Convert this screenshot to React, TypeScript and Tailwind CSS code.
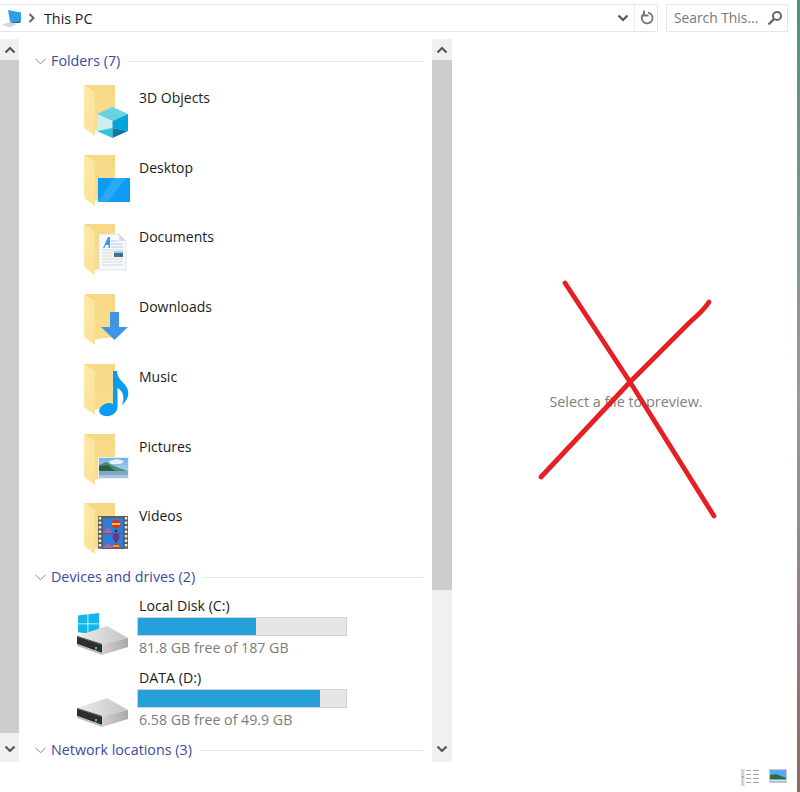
import React from "react";

const font = { fontFamily: '"Open Sans", "Noto Sans", sans-serif' };

function Folder({ children }: { children?: React.ReactNode }) {
  return (
    <svg width="48" height="56" viewBox="0 0 48 56" className="shrink-0 block">
      <defs>
        <linearGradient id="fb" x1="0" y1="0" x2="0" y2="1">
          <stop offset="0" stopColor="#f7d884" />
          <stop offset="1" stopColor="#f9dc90" />
        </linearGradient>
        <linearGradient id="ff" x1="0" y1="0" x2="1" y2="1">
          <stop offset="0" stopColor="#fdeaa8" />
          <stop offset="1" stopColor="#fbe196" />
        </linearGradient>
      </defs>
      <path d="M0 0H31V43L14 45 11 46V8Z" fill="url(#fb)" />
      <path d="M0 0L11 8V51L0 43Z" fill="url(#ff)" />
      {children}
    </svg>
  );
}

function Cube() {
  return (
    <>
      <path d="M28.5 22L44 29 28.5 36 13 29Z" fill="#66d3e2" />
      <path d="M13 29L28.5 36V43L13 46Z" fill="#cdeff3" />
      <path d="M13 46L28.5 43V53Z" fill="#2cc6d8" />
      <path d="M28.5 36L44 29V46L28.5 43Z" fill="#05a3db" />
      <path d="M28.5 43L44 46 28.5 53Z" fill="#087ba6" />
    </>
  );
}

function Monitor() {
  return (
    <>
      <rect x="14" y="23" width="32" height="24" fill="#0e9cf3" />
      <path d="M30 23H42L24 47H14Z" fill="#2aa9f5" />
    </>
  );
}

function Doc() {
  return (
    <>
      <path d="M15 10H35L42 17V46H15Z" fill="#f7f8fa" stroke="#d8dbe0" strokeWidth="0.7" />
      <path d="M35 10V17H42Z" fill="#d9dde2" />
      <path d="M19 24L24 13H26V24H24.5V21H21.5L20.5 24Z" fill="#3f9ae0" />
      <path d="M27 17H33M27 20H39M27 23H39" stroke="#a9cde8" strokeWidth="1" />
      <path d="M18 26H39M18 29H28M18 32H28M18 35H39M18 38H39M18 41H39" stroke="#d4d8dd" strokeWidth="1" />
      <rect x="30" y="27" width="9" height="6" fill="#3d6f8e" />
      <rect x="30" y="27" width="9" height="2" fill="#a8cbe4" />
    </>
  );
}

function Down() {
  return <path d="M26 18H35V33H44L30.5 46 17 33H26Z" fill="#3e96e6" />;
}

function Note() {
  return (
    <path
      d="M29 7H33C33 14 38 17 42 22 46 28 45 35 38 41 41 33 39 27 33.5 24V43C33.5 49 27 53 21 52 15 51 13 46 18 42 21 39 26 38 29 40Z"
      fill="#0b9bf1"
    />
  );
}

function Photo() {
  return (
    <>
      <defs>
        <linearGradient id="sky" x1="0" y1="0" x2="0" y2="1">
          <stop offset="0" stopColor="#6fb0e8" />
          <stop offset="1" stopColor="#cfe4f2" />
        </linearGradient>
      </defs>
      <rect x="14" y="23" width="31" height="22" fill="#eef1f4" />
      <rect x="15" y="24" width="29" height="20" fill="url(#sky)" />
      <path d="M25 27L33 25 40 27 37 30 27 30Z" fill="#e8f2fa" />
      <path d="M15 31L22 28 28 31 35 34 44 37V40H15Z" fill="#4f8a6a" />
      <path d="M15 32L24 31 31 37H15Z" fill="#2c5e48" />
      <path d="M15 37H44V44H15Z" fill="#7ea8c4" />
      <path d="M15 41H44V44H15Z" fill="#a9c8dc" />
    </>
  );
}

function Film() {
  return (
    <>
      <rect x="14" y="13" width="30" height="33" fill="#5c5c5c" />
      <path d="M16 14V46M42 14V46" stroke="#e8e8e8" strokeWidth="2.5" strokeDasharray="2.5 2" />
      <rect x="19" y="15" width="20" height="15" fill="#2b7fd8" />
      <rect x="19" y="31" width="20" height="14" fill="#2b7fd8" />
      <circle cx="32" cy="21" r="4.5" fill="#d8322a" />
      <path d="M28 21H36" stroke="#f4c430" strokeWidth="2" />
      <path d="M32 26L30.5 29H33.5Z" fill="#222" />
      <path d="M19 30L24 25 29 30Z" fill="#b560a8" />
      <circle cx="32" cy="34" r="3.5" fill="#7a2d8a" />
      <path d="M32 37.5V39" stroke="#111" strokeWidth="1.5" />
      <circle cx="32" cy="43" r="3" fill="#d8322a" />
      <path d="M29 43H35" stroke="#f4c430" strokeWidth="1.5" />
      <path d="M19 45L24 40 29 45Z" fill="#b560a8" />
    </>
  );
}

function DriveBody() {
  return (
    <>
      <defs>
        <linearGradient id="dt" x1="0" y1="0" x2="1" y2="0">
          <stop offset="0" stopColor="#ececec" />
          <stop offset="1" stopColor="#c4c4c4" />
        </linearGradient>
        <linearGradient id="dr" x1="0" y1="0" x2="1" y2="0">
          <stop offset="0" stopColor="#d2d2d2" />
          <stop offset="1" stopColor="#a9a9a9" />
        </linearGradient>
      </defs>
      <path d="M0 10L30 0 51 12 25 18Z" fill="url(#dt)" />
      <path d="M25 18L51 12V21L25 29Z" fill="url(#dr)" />
      <path d="M0 10L25 18V27L0 18Z" fill="#2e2e2e" />
      <path d="M0 18L25 27V29L0 20Z" fill="#bdbdbd" />
      <path d="M0 10L25 18V19L0 11Z" fill="#6a6a6a" />
      <rect x="18" y="21" width="2" height="2.5" fill="#39d353" />
    </>
  );
}

function DriveIcon({ windows }: { windows?: boolean }) {
  return (
    <svg width="54" height="44" viewBox="0 0 54 44" className="shrink-0 block">
      {windows && (
        <>
          <path d="M1 2.6L10.5 1.3V10.5H1Z" fill="#12b5ec" />
          <path d="M11.3 1.2L22 0V10.5H11.3Z" fill="#12b5ec" />
          <path d="M1 11.3H10.5V20.5L1 19.3Z" fill="#12b5ec" />
          <path d="M11.3 11.3H22V22L11.3 20.6Z" fill="#12b5ec" />
        </>
      )}
      <g transform="translate(0 13)">
        <DriveBody />
      </g>
    </svg>
  );
}

function Chevron({ up, className }: { up?: boolean; className?: string }) {
  return (
    <svg width="12" height="8" viewBox="0 0 12 8" className={className}>
      <path d={up ? "M1.5 6.5L6 2 10.5 6.5" : "M1.5 1.5L6 6 10.5 1.5"} fill="none" stroke="#555" strokeWidth="2.2" />
    </svg>
  );
}

function Header({ title }: { title: string }) {
  return (
    <div className="flex items-center h-5 pl-[16px] pr-[9px]">
      <svg width="11" height="7" viewBox="0 0 11 7" className="shrink-0">
        <path d="M0.5 0.8L5.5 5.8 10.5 0.8" fill="none" stroke="#8a8a8a" strokeWidth="1" />
      </svg>
      <span className="ml-[5px] text-[14.3px] leading-5 text-[#3b4a9e] whitespace-nowrap">{title}</span>
      <div className="ml-[8px] flex-1 h-px bg-[#e3e3e3]" />
    </div>
  );
}

const folders: [string, React.ReactNode][] = [
  ["3D Objects", <Cube />],
  ["Desktop", <Monitor />],
  ["Documents", <Doc />],
  ["Downloads", <Down />],
  ["Music", <Note />],
  ["Pictures", <Photo />],
  ["Videos", <Film />],
];

function Drive({ name, free, pct, windows }: { name: string; free: string; pct: number; windows?: boolean }) {
  return (
    <div className="flex pl-[58px]">
      <div className="w-[60px] pt-[16px]">
        <DriveIcon windows={windows} />
      </div>
      <div className="w-[210px]">
        <div className="h-[18px] leading-[18px] text-[14.2px] text-[#1a1a1a] pl-[2px] whitespace-nowrap">{name}</div>
        <div className="mt-[2px] h-[19px] bg-[#e6e6e6] border border-[#d2d2d2]">
          <div className="h-full bg-[#26a0da]" style={{ width: `${pct}%` }} />
        </div>
        <div className="mt-[3px] h-[18px] leading-[18px] text-[14.2px] text-[#7b7b7b] pl-[2px] whitespace-nowrap">{free}</div>
      </div>
    </div>
  );
}

function ScrollBar({ thumb, width }: { thumb: string; width: string }) {
  return (
    <div className={`flex flex-col bg-[#f0f0f0] h-full shrink-0 ${width}`}>
      <div className="h-[21px] flex items-center justify-center shrink-0">
        <Chevron up />
      </div>
      <div className={thumb} />
      <div className="flex-1" />
      <div className="h-[29px] flex items-center justify-center shrink-0 pt-[2px]">
        <Chevron />
      </div>
    </div>
  );
}

export default function App() {
  return (
    <div className="relative w-[800px] h-[792px] flex bg-white overflow-hidden" style={font}>
      <div className="flex-1 flex flex-col min-w-0">
        {/* top bar */}
        <div className="flex h-[28px] mt-[4px] pr-[9px] shrink-0">
          <div className="flex-1 flex items-center border-y border-r border-[#e6e6e6] pl-[2px]">
            <svg width="20" height="19" viewBox="0 0 20 19" className="shrink-0">
              <path d="M6 1L19 3.5V12L8 12.5Z" fill="#2f9fe8" />
              <path d="M8 12.5L19 12 18 14 8 14Z" fill="#1b6fb8" />
              <path d="M0 15.5L8 13 15 15 8 18.5Z" fill="#d3d6da" />
            </svg>
            <svg width="8" height="10" viewBox="0 0 8 10" className="ml-[6px] shrink-0">
              <path d="M1.5 1L5.5 5 1.5 9" fill="none" stroke="#666" strokeWidth="2" />
            </svg>
            <span className="ml-[8px] pt-[1px] text-[14.3px] text-[#1a1a1a]">This PC</span>
            <div className="flex-1" />
            <Chevron className="mr-[3px]" />
            <div className="ml-[2px] w-px h-full bg-[#ececec]" />
            <svg width="16" height="16" viewBox="0 0 16 16" className="ml-[4px] mr-[2px] shrink-0">
              <path d="M9 2.6A5.4 5.4 0 1 1 4.5 4" fill="none" stroke="#777" strokeWidth="1.8" />
              <path d="M5 0.5V5.5H9.5" fill="none" stroke="#777" strokeWidth="1.8" />
            </svg>
          </div>
          <div className="ml-[8px] w-[122px] flex items-center border border-[#e6e6e6] pl-[7px]">
            <span className="pt-[1px] text-[13.8px] text-[#777777] whitespace-nowrap">Search This...</span>
            <div className="flex-1" />
            <svg width="16" height="16" viewBox="0 0 16 16" className="mr-[4px] shrink-0">
              <circle cx="10" cy="6" r="4" fill="none" stroke="#666" strokeWidth="2" />
              <path d="M7 9L1.5 14.5" stroke="#666" strokeWidth="2.4" />
            </svg>
          </div>
        </div>

        {/* main */}
        <div className="flex h-[723px] mt-[7px] shrink-0">
          <ScrollBar width="w-[19px]" thumb="bg-[#cdcdcd] h-[673px] shrink-0" />
          <div className="w-[413px] shrink-0 overflow-hidden pt-[12px] flex flex-col">
            <Header title="Folders (7)" />
            <div className="mt-[14px] flex flex-col gap-[13.72px] pl-[65px]">
              {folders.map(([name, overlay]) => (
                <div key={name} className="flex h-[56px]">
                  <Folder>{overlay}</Folder>
                  <div className="ml-[7px] mt-[3px] h-5 leading-5 text-[14px] text-[#1a1a1a] whitespace-nowrap">{name}</div>
                </div>
              ))}
            </div>
            <div className="mt-[7.7px]">
              <Header title="Devices and drives (2)" />
            </div>
            <div className="mt-[10px] flex flex-col gap-[12px]">
              <Drive name="Local Disk (C:)" free="81.8 GB free of 187 GB" pct={56.5} windows />
              <Drive name="DATA (D:)" free="6.58 GB free of 49.9 GB" pct={87.5} />
            </div>
            <div className="mt-[11px]">
              <Header title="Network locations (3)" />
            </div>
          </div>
          <ScrollBar width="w-[20px]" thumb="bg-[#cdcdcd] h-[530px] shrink-0" />
          <div className="flex-1 flex items-center justify-center pt-[2px] pl-[3px]">
            <span className="text-[14.4px] text-[#808080] whitespace-nowrap">Select a file to preview.</span>
          </div>
        </div>

        {/* status */}
        <div className="flex items-start justify-end pr-[10px] pt-[7px] gap-[10px]">
          <svg width="18" height="17" viewBox="0 0 18 17">
            <rect x="0" y="0" width="3.5" height="17" fill="#d4d4d4" />
            <path d="M5 1.5H10M12 1.5H18M5 5.5H10M12 5.5H18M5 9.5H10M12 9.5H18M5 13.5H10M12 13.5H18" stroke="#a6a6a6" strokeWidth="1.2" />
            <rect x="1" y="7" width="1.5" height="1.5" fill="#e0735a" />
          </svg>
          <svg width="18" height="14" viewBox="0 0 18 14">
            <rect width="18" height="14" fill="#c9ccd0" />
            <rect x="1" y="1" width="16" height="11.5" fill="#5aa8f0" />
            <path d="M1 6L7 5 17 9V12.5H1Z" fill="#2f6a4a" />
            <path d="M1 10.5H17V12.5H1Z" fill="#dfe8ee" />
          </svg>
        </div>
      </div>

      {/* desktop strip */}
      <div className="w-[3px] h-full shrink-0 bg-gradient-to-b from-[#4f8f88] via-[#9a9a96] to-[#8b6a62]" />

      {/* red X drawn over the preview */}
      <svg className="absolute inset-0 pointer-events-none" width="800" height="792" viewBox="0 0 800 792">
        <path d="M565 283L630 382 714 516" fill="none" stroke="#e51f23" strokeWidth="4.8" strokeLinecap="round" />
        <path d="M541 477L630 382 690 322C698 315 704 310 709 302" fill="none" stroke="#e51f23" strokeWidth="4.8" strokeLinecap="round" />
      </svg>
    </div>
  );
}
